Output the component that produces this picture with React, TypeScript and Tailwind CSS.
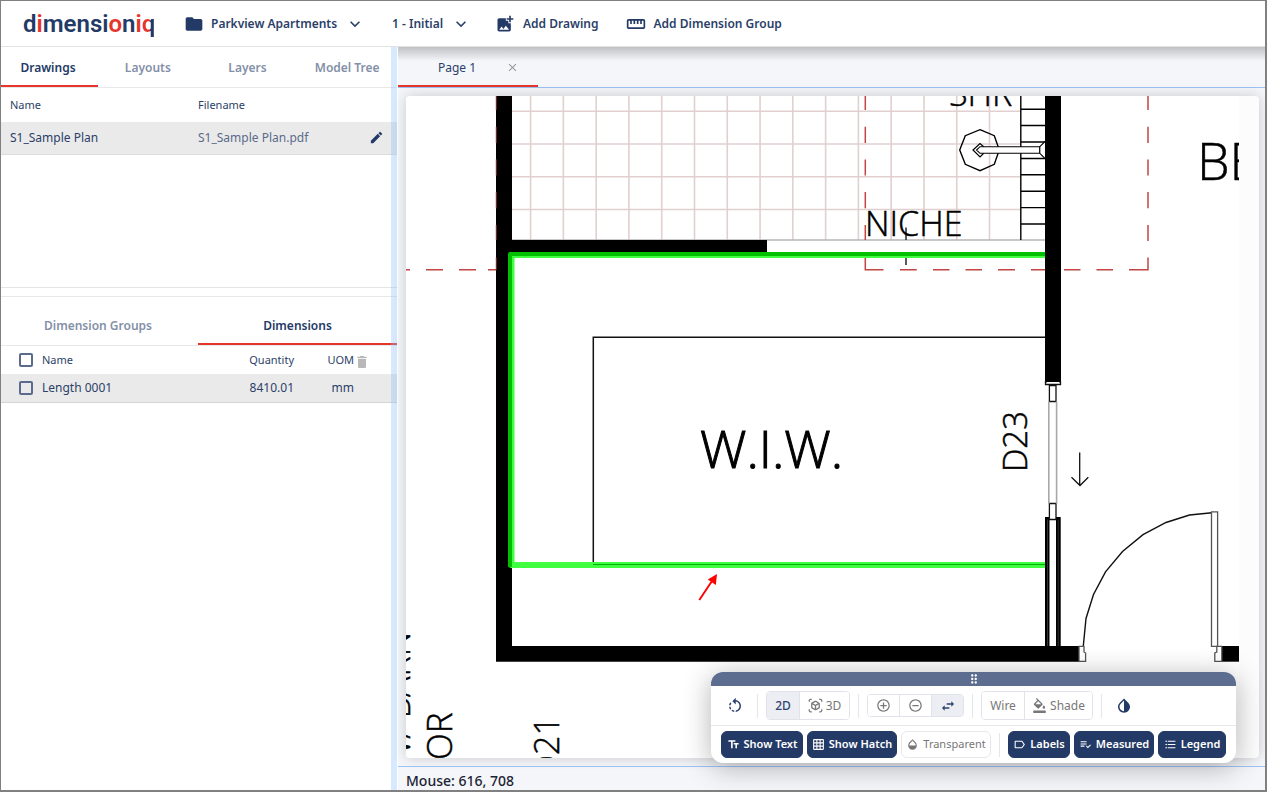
import type { ReactNode } from "react";
import {
  MdAddCircleOutline,
  MdAddPhotoAlternate,
  MdClose,
  MdDelete,
  MdDragIndicator,
  MdEdit,
  MdExpandMore,
  MdFolder,
  MdFormatColorFill,
  MdFormatListBulleted,
  MdGridOn,
  MdInvertColors,
  MdLabelOutline,
  MdOpacity,
  MdOutlineStraighten,
  MdOutlineViewInAr,
  MdPlaylistAddCheck,
  MdRemoveCircleOutline,
  MdRotateLeft,
  MdSwapHoriz,
  MdTextFields,
} from "react-icons/md";

function Logo() {
  return (
    <a
      href="#home"
      aria-label="dimensioniq"
      className="w-[133px] font-['Roboto',sans-serif] text-2xl leading-8 font-semibold text-[#243a66]"
    >
      d<span className="text-[#e6352b]">i</span>mensi<span className="text-[#e6352b]">o</span>n
      <span className="text-[#e6352b]">i</span>
      <span className="bg-linear-to-r from-[#e6352b] from-65% to-[#243a66] to-65% bg-clip-text text-transparent">q</span>
    </a>
  );
}

function HeaderSelect({ label, value }: { label: string; value: string }) {
  return (
    <label className="flex items-center gap-[7px]">
      <span className="sr-only">{label}</span>
      <select className="h-6 appearance-none bg-transparent p-0 leading-6 font-semibold outline-none">
        <option>{value}</option>
      </select>
      <MdExpandMore size={20} className="pointer-events-none" />
    </label>
  );
}

function Header() {
  return (
    <header className="relative z-10 flex h-[46px] shrink-0 items-center border-b border-[#e2e2e2] bg-white pl-[22px] text-xs font-semibold text-[#2b3f69]">
      <Logo />
      <div className="ml-7 flex items-center gap-[7px]">
        <MdFolder size={20} className="text-[#243a66]" />
        <HeaderSelect label="Project" value="Parkview Apartments" />
      </div>
      <div className="ml-[27px]">
        <HeaderSelect label="Revision" value="1 - Initial" />
      </div>
      <button className="ml-6 flex items-center gap-2">
        <MdAddPhotoAlternate size={20} className="text-[#243a66]" />
        Add Drawing
      </button>
      <button className="ml-[27px] flex items-center gap-2">
        <MdOutlineStraighten size={20} className="text-[#243a66]" />
        Add Dimension Group
      </button>
    </header>
  );
}

const drawingTabs = ["Layouts", "Layers", "Model Tree"];

function Sidebar() {
  return (
    <aside className="relative flex w-[396px] shrink-0 flex-col bg-white text-xs text-[#2b3f69]">
      <section className="h-[241px] border-b border-[#e5e5e5]">
        <div role="tablist" className="flex h-[41px] border-b border-[#e8e8e8] font-semibold">
          <button role="tab" aria-selected="true" className="w-[97px] border-b-2 border-[#e6352b] pt-[3px] pr-[3px] text-[#243a66]">
            Drawings
          </button>
          {drawingTabs.map((tab) => (
            <button key={tab} role="tab" aria-selected="false" className="flex-1 pt-[3px] pb-[2px] text-[#8490a8]">
              {tab}
            </button>
          ))}
        </div>
        <table className="w-full table-fixed text-left">
          <thead className="text-[11px]">
            <tr className="h-[34px]">
              <th className="w-[188px] pl-[9px] font-normal">Name</th>
              <th className="pl-[9px] font-normal">Filename</th>
              <th className="w-10" aria-label="Actions" />
            </tr>
          </thead>
          <tbody>
            <tr className="h-8 border-b border-[#dcdcdc] bg-[#eaeaea]">
              <td className="pl-[9px]">S1_Sample Plan</td>
              <td className="pl-[9px] text-[#5b6b8a]">S1_Sample Plan.pdf</td>
              <td>
                <button aria-label="Edit drawing" className="ml-3 flex text-[#243a66]">
                  <MdEdit size={15} />
                </button>
              </td>
            </tr>
          </tbody>
        </table>
      </section>

      <section className="mt-2 border-t border-[#e8e8e8]">
        <div role="tablist" className="flex h-[49px] border-b border-[#e8e8e8] pt-2 font-semibold">
          <button role="tab" aria-selected="false" className="w-[197px] pt-[2px] pr-[3px] text-[#8490a8]">
            Dimension Groups
          </button>
          <button role="tab" aria-selected="true" className="flex-1 border-b-2 border-[#e6352b] pt-[4px] text-[#243a66]">
            Dimensions
          </button>
        </div>
        <table className="w-full table-fixed text-left">
          <thead className="text-[11px]">
            <tr className="h-7">
              <th className="w-[41px] pl-[18px]">
                <input type="checkbox" aria-label="Select all dimensions" className="block size-[14px] appearance-none rounded-xs border-2 border-[#5b6b8d]" />
              </th>
              <th className="font-normal">Name</th>
              <th className="w-[100px] text-right font-normal">Quantity</th>
              <th className="w-[60px] text-right font-normal">UOM</th>
              <th className="w-[43px]">
                <button aria-label="Delete selected" className="flex pt-1 text-[#b8b8b8]">
                  <MdDelete size={16} />
                </button>
              </th>
            </tr>
          </thead>
          <tbody>
            <tr className="h-7 border-b border-[#d5d5d5] bg-[#eaeaea]">
              <td className="pl-[18px]">
                <input type="checkbox" aria-label="Select Length 0001" className="block size-[14px] appearance-none rounded-xs border-2 border-[#5b6b8d]" />
              </td>
              <td>Length 0001</td>
              <td className="text-right">8410.01</td>
              <td className="text-right">mm</td>
              <td />
            </tr>
          </tbody>
        </table>
      </section>
      <div role="separator" className="absolute inset-y-0 right-0 w-[6px] bg-[#8bc1fb]/35" />
    </aside>
  );
}

const gridColumns = Array.from({ length: 15 }, (_, i) => 530.6 + i * 32.78);
const gridRows = [111.3, 144, 176.7, 209.5];
const rungs = [109.2, 125.5, 142, 158.5, 174.8, 191.2, 207.6, 224];
const redDashes =
  "M865.3 96V110M865.3 126.7V143M865.3 159.4V175.5M865.3 192V208.3M865.3 225V240M865.3 257.5V269.7H883.5M900 269.7H916.8M933 269.7H949.5M965.5 269.7H982M998 269.7H1015M1031 269.7H1045M1064 269.7H1080.5M1096.5 269.7H1113M1129 269.7H1148V257.5M1148 241V225M1148 208.3V192M1148 175.5V159.4M1148 143V126.7M1148 110V96M406 269.7H410M426 269.7H443M459 269.7H476M488 269.7H497";

function FloorPlan() {
  return (
    <svg
      role="img"
      aria-label="Floor plan"
      width={833}
      height={662}
      viewBox="406 96 833 662"
      fill="none"
      className="block font-['Open_Sans','Noto_Sans',sans-serif] font-light"
    >
      <rect x={406} y={96} width={833} height={662} fill="#fff" />
      <g stroke="#e2cfcf" strokeWidth={1.6}>
        {gridColumns.map((x) => (
          <path key={x} d={`M${x} 96V240`} />
        ))}
        {gridRows.map((y) => (
          <path key={y} d={`M512 ${y}H1021`} />
        ))}
      </g>
      <path d="M512 240H1045" stroke="#b5b5b5" strokeWidth={1.6} />
      <path d={redDashes} stroke="#c24545" strokeWidth={1.5} />

      <g stroke="#000" strokeWidth={1.4}>
        <path d="M1020.8 96V240" />
        {rungs.map((y) => (
          <path key={y} d={`M1021 ${y}H1045`} />
        ))}
        <path d="M980 129.7L994.3 135.7L999.3 150L994.3 164.3L980 170.7L965.3 164.3L959.7 150L965.3 135.7Z" />
        <path d="M984 147L980 143.5L973 150L980 157L984 153" strokeWidth={1.2} />
        <path d="M980 146.7H1039.8V153.3H980L976.5 150Z" fill="#fff" strokeWidth={1.1} />
        <path d="M1045 141.5L1039.8 146.7V153.3L1045 158.5" fill="#fff" strokeWidth={1.1} />
      </g>

      <g fill="#000">
        <path d="M496 96H512V646H1079V661.7H496Z" />
        <path d="M512 240H767V253H512Z" />
        <path d="M1045 96H1061V383H1045Z" />
        <path d="M1222 646H1239V661.7H1222Z" />
        <path d="M1045 517H1049.5V647H1045ZM1056 517H1060.7V647H1056Z" />
      </g>
      <path d="M1047.5 519.5V646M1058.2 519.5V646" stroke="#555" strokeWidth={0.6} />
      <path d="M496.3 96V110M496.3 126.7V143M496.3 159.4V175.5M496.3 192V208.3M496.3 225V240M496.3 257.5V270" stroke="#8a2f2f" />

      <g stroke="#111" strokeWidth={1.3}>
        <path d="M593.3 564V337.2H1045" strokeWidth={1.5} />
        <path d="M1045.5 381V384.5H1060.5V381" />
        <path d="M1046.5 382.5H1059.5" stroke="#fff" strokeWidth={1} />
        <path d="M1049.4 385.5H1056V401.5H1049.4ZM1049.4 503.5H1056V519.5H1049.4Z" fill="#fff" />
        <path d="M1048.8 401.5V503.5M1056.6 401.5V503.5" stroke="#a8a8a8" strokeWidth={1.6} />
        <path d="M1079.7 452.5V485.5M1071.5 477.3L1080 485.5L1088.3 477.3" />
        <path d="M1083.3 646L1086 618.5L1093.5 594.5L1105.5 571.8L1122.5 551.5L1143 534.6L1166 522.5L1189.5 515L1212 512.7" strokeWidth={1.4} />
        <path d="M1211.5 511.8H1217.6V646.3H1211.5Z" stroke="#555" fill="#fff" />
        <path d="M1079 646.3H1084V652L1085.6 653V661.3H1079Z" stroke="#555" fill="#fff" />
        <path d="M1221.8 646.3H1216.8V652L1214.8 653V661.3H1221.8Z" stroke="#555" fill="#fff" />
        <path d="M906 227.5V240M906 256V265" stroke="#333" strokeWidth={1.6} />
      </g>

      <path d="M1045 255H511.5V565H1045" stroke="#40ff40" strokeWidth={6} strokeLinejoin="round" />
      <path d="M1045 254H510V567" stroke="#00c000" strokeWidth={4} strokeLinejoin="round" />
      <path d="M593 564.5H1045" stroke="#00b000" strokeWidth={1.2} />

      <g fill="#ff0000">
        <path d="M699.3 600L712 581" stroke="#ff0000" strokeWidth={1.9} />
        <path d="M717 574L715.8 585L707.8 579.6Z" />
      </g>

      <g fill="#000" stroke="#000" strokeWidth={0.5}>
        <text x={700} y={468} fontSize={52} strokeWidth={1}>W.I.W.</text>
        <text x={865} y={236} fontSize={34}>NICHE</text>
        <text x={949} y={106} fontSize={34}>SHR</text>
        <text x={1197} y={180} fontSize={52}>BE</text>
        <text transform="translate(1027 472) rotate(-90)" fontSize={33}>D23</text>
        <text transform="translate(452 760) rotate(-90)" fontSize={35}>OR</text>
        <text transform="translate(559 779) rotate(-90)" fontSize={34}>D21</text>
        <text transform="translate(410 769) rotate(-90)" fontSize={34}>W/ BARN</text>
      </g>
    </svg>
  );
}

function Divider() {
  return <div className="h-6 w-px bg-[#e4e6ea]" />;
}

function Segment({ active = false, label, className, children }: { active?: boolean; label?: string; className: string; children: ReactNode }) {
  return (
    <button
      aria-label={label}
      aria-pressed={active}
      className={`flex items-center justify-center gap-[3px] ${active ? "bg-[#eceef3] text-[#2f4470]" : "bg-white text-[#777]"} ${className}`}
    >
      {children}
    </button>
  );
}

function Toggle({ active = true, className, children }: { active?: boolean; className: string; children: ReactNode }) {
  return (
    <button
      aria-pressed={active}
      className={`flex h-[27px] items-center justify-center gap-1 rounded-md border text-[11px] ${
        active ? "border-[#243a66] bg-[#243a66] font-semibold text-white" : "border-[#e8e8ec] bg-white text-[#777]"
      } ${className}`}
    >
      {children}
    </button>
  );
}

const groupStyle = "flex divide-x divide-[#e0e3ea] overflow-hidden rounded-sm border border-[#e0e3ea]";

function ViewToolbar() {
  return (
    <div className="absolute right-[29px] bottom-[27px] w-[525px] overflow-hidden rounded-xl bg-white shadow-[0_4px_28px_rgba(0,0,0,0.3)]">
      <div className="flex h-[14px] items-center justify-center bg-[#5c6d8f] text-white">
        <MdDragIndicator size={14} />
      </div>
      <div className="flex h-10 items-center gap-2 border-b border-[#e8e8ec] px-[10px] text-xs">
        <button aria-label="Reset rotation" className="flex w-7 justify-center text-[#2f4470]">
          <MdRotateLeft size={18} />
        </button>
        <Divider />
        <div className={`${groupStyle} h-[29px] w-[84px]`}>
          <Segment active className="w-[33px] font-medium">2D</Segment>
          <Segment className="flex-1">
            <MdOutlineViewInAr size={15} />
            3D
          </Segment>
        </div>
        <Divider />
        <div className={`${groupStyle} h-[23px] w-[97px]`}>
          <Segment label="Zoom in" className="flex-1">
            <MdAddCircleOutline size={15} />
          </Segment>
          <Segment label="Zoom out" className="flex-1">
            <MdRemoveCircleOutline size={15} />
          </Segment>
          <Segment active label="Pan" className="flex-1">
            <MdSwapHoriz size={16} />
          </Segment>
        </div>
        <Divider />
        <div className={`${groupStyle} h-[29px] w-[112px]`}>
          <Segment className="w-[43px]">Wire</Segment>
          <Segment className="flex-1">
            <MdFormatColorFill size={15} />
            Shade
          </Segment>
        </div>
        <Divider />
        <button aria-label="Invert colours" className="flex w-7 justify-center text-[#243a66]">
          <MdInvertColors size={18} />
        </button>
      </div>
      <div className="flex h-[37px] items-center gap-1 px-[10px]">
        <Toggle className="w-[82px]">
          <MdTextFields size={13} />
          Show Text
        </Toggle>
        <Toggle className="w-[90px]">
          <MdGridOn size={13} />
          Show Hatch
        </Toggle>
        <Toggle active={false} className="w-[90px]">
          <MdOpacity size={13} />
          Transparent
        </Toggle>
        <div className="flex flex-1 justify-center">
          <Divider />
        </div>
        <Toggle className="w-[62px]">
          <MdLabelOutline size={13} />
          Labels
        </Toggle>
        <Toggle className="w-20">
          <MdPlaylistAddCheck size={13} />
          Measured
        </Toggle>
        <Toggle className="w-[68px]">
          <MdFormatListBulleted size={13} />
          Legend
        </Toggle>
      </div>
    </div>
  );
}

function Workspace() {
  return (
    <main className="relative flex min-w-0 flex-1 flex-col bg-[#f4f6fa] text-xs text-[#2b3f69]">
      <div className="flex h-[41px] shrink-0 border-b border-[#9cc3f5] bg-linear-to-b from-[#c0c1c4] via-[#f4f6fa] via-35% to-[#f4f6fa]">
        <div role="tablist" className="flex w-[140px] items-center justify-between border-b-2 border-[#e6352b] pt-[3px] pr-[19px] pl-10">
          <button role="tab" aria-selected="true">Page 1</button>
          <button aria-label="Close Page 1" className="text-[#999]">
            <MdClose size={13} />
          </button>
        </div>
      </div>
      <div className="flex min-h-0 flex-1 p-[8px] pr-[6px]">
        <div className="min-w-0 flex-1 overflow-hidden rounded-sm bg-[#fcfcfc] shadow-[0_0_14px_rgba(0,0,0,0.18)]">
          <FloorPlan />
        </div>
      </div>
      <footer className="flex h-6 shrink-0 items-center border-t border-[#9cc3f5] pt-1 pl-2 text-sm font-medium text-[#1c2433]">
        Mouse: 616, 708
      </footer>
      <ViewToolbar />
    </main>
  );
}

export default function App() {
  return (
    <div className="flex h-screen flex-col overflow-hidden border border-r-2 border-b-2 border-[#808080] bg-white font-['Noto_Sans',sans-serif]">
      <Header />
      <div className="flex min-h-0 flex-1 gap-px">
        <Sidebar />
        <Workspace />
      </div>
    </div>
  );
}
